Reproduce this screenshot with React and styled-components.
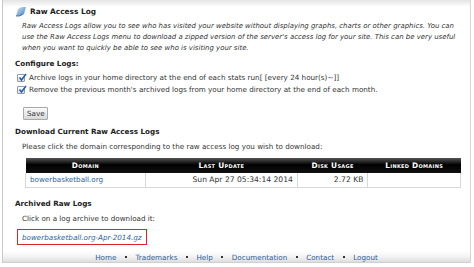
import React from "react";
import styled, { createGlobalStyle } from "styled-components";

const Global = createGlobalStyle`
    html, body {
        margin: 0;
        padding: 0;
        background: #fff;
        font-family: "DejaVu Sans", Verdana, sans-serif;
        color: #333;
    }
`

const Page = styled.div`
    width: 474px;
    height: 267px;
    overflow: hidden;
`

const Panel = styled.div`
    margin-left: 2px;
    width: 467px;
    height: 263px;
    border-left: 1px solid #c8c8c8;
    border-right: 1px solid #d6d6d6;
    display: flex;
    flex-direction: column;
    background: linear-gradient(#e4e4e4, #fff 7px);
`

const Content = styled.div`
    flex: 1;
    padding: 4px 8px 0 12px;
`

const TitleRow = styled.div`
    display: flex;
    align-items: center;
    gap: 3px;
    height: 14px;
`

const Title = styled.h1`
    margin: 0;
    font-size: 7.4px;
    font-weight: bold;
    color: #222;
`

const Intro = styled.p`
    margin: 3px 0 0 7px;
    font-size: 6.95px;
    font-style: italic;
    line-height: 11px;
    white-space: nowrap;
    color: #333;
`

const Heading = styled.h2`
    margin: ${p => p.$top || 8}px 0 0 0;
    font-size: 7.2px;
    font-weight: bold;
    color: #222;
    line-height: 11px;
`

const CheckRow = styled.label`
    display: flex;
    align-items: center;
    gap: 4px;
    margin: ${p => p.$top || 0}px 0 0 2px;
    font-size: 7.2px;
    line-height: 12px;
    color: #333;
`

const Box = styled.span`
    width: 6px;
    height: 6px;
    border: 1px solid #8a9ab0;
    border-radius: 1px;
    background: linear-gradient(#fff, #dde3ea);
    position: relative;
    flex: none;
`

const Tick = styled.svg`
    position: absolute;
    left: 0;
    top: -2px;
`

const SaveButton = styled.button`
    display: block;
    margin: 11px 0 0 8px;
    padding: 0 3px;
    width: 25px;
    height: 13px;
    font-family: inherit;
    font-size: 7.2px;
    color: #333;
    border: 1px solid #a9a9a9;
    border-radius: 1px;
    background: linear-gradient(#fbfbfb, #d8d8d8);
`

const Note = styled.p`
    margin: ${p => p.$top || 4}px 0 0 7px;
    font-size: 7.2px;
    line-height: 11px;
    color: #333;
`

const Table = styled.table`
    margin: 6px 0 0 10px;
    width: 436px;
    border-collapse: collapse;
    font-size: 7.6px;
`

const Th = styled.th`
    height: 15px;
    padding: 0 4px;
    background: linear-gradient(#555, #000 45%, #111);
    color: #fff;
    font-weight: bold;
    font-size: 7.4px;
    font-variant: small-caps;
    letter-spacing: 0.3px;
    text-align: center;
    width: ${p => p.$w}px;
`

const Td = styled.td`
    height: 14px;
    padding: 0 4px;
    border: 1px solid #d8d8d8;
    border-top: none;
    text-align: ${p => p.$align || "left"};
    color: #333;
`

const Link = styled.a`
    color: #2a5f9e;
    text-decoration: none;
    font-size: 7.2px;
    font-style: ${p => (p.$italic ? "italic" : "normal")};
`

const Archive = styled.div`
    margin: 5px 0 0 2px;
    width: 130px;
    height: 16px;
    border: 1.5px solid #d9262c;
    display: flex;
    align-items: center;
    padding-left: 4px;
    box-sizing: border-box;
`

const Footer = styled.div`
    height: 11px;
    display: flex;
    justify-content: center;
    align-items: flex-end;
    gap: 8.5px;
    font-size: 7.2px;
    line-height: 9px;
    background: linear-gradient(#fff, #f3f3f3 50%, #dedede);
    border-bottom: 1px solid #d0d0d0;
`

const Dot = styled.span`
    width: 2px;
    height: 2px;
    margin-bottom: 4px;
    background: #333;
`

const FooterLink = styled.a`
    color: #2a5f9e;
    text-decoration: none;
`

const LogIcon = () => (
    <svg width="12" height="11" viewBox="0 0 12 11">
        <defs>
            <linearGradient id="lg" x1="0" y1="0" x2="1" y2="1">
                <stop offset="0" stopColor="#d4e6f5" />
                <stop offset="1" stopColor="#3f7fc0" />
            </linearGradient>
        </defs>
        <path d="M1 10 L3 3 Q5 1 8 1 L11 1 L9 8 Q7 10 4 10 Z" fill="url(#lg)" />
        <path d="M1 10 L4 10 Q6 10 7 8" fill="none" stroke="#2d5f95" strokeWidth="0.8" />
    </svg>
)

const Check = ({ children, top }) => (
    <CheckRow $top={top}>
        <Box>
            <Tick width="9" height="9" viewBox="0 0 9 9">
                <path d="M1.5 4.5 L3.5 7 L8 1" fill="none" stroke="#2a5ba8" strokeWidth="1.6" />
            </Tick>
        </Box>
        {children}
    </CheckRow>
)

const footerLinks = ["Home", "Trademarks", "Help", "Documentation", "Contact", "Logout"];

const App = () => (
    <Page>
        <Global />
        <Panel>
            <Content>
                <TitleRow>
                    <LogIcon />
                    <Title>Raw Access Log</Title>
                </TitleRow>
                <Intro>
                    Raw Access Logs allow you to see who has visited your website without displaying graphs, charts or other graphics. You can<br />
                    use the Raw Access Logs menu to download a zipped version of the server's access log for your site. This can be very useful<br />
                    when you want to quickly be able to see who is visiting your site.
                </Intro>
                <Heading $top={3.5}>Configure Logs:</Heading>
                <Check top={3.5}>Archive logs in your home directory at the end of each stats run[ [every 24 hour(s)~]]</Check>
                <Check>Remove the previous month's archived logs from your home directory at the end of each month.</Check>
                <SaveButton>Save</SaveButton>
                <Heading $top={5.5}>Download Current Raw Access Logs</Heading>
                <Note>Please click the domain corresponding to the raw access log you wish to download:</Note>
                <Table>
                    <thead>
                        <tr>
                            <Th $w={117}>Domain</Th>
                            <Th $w={159}>Last Update</Th>
                            <Th $w={68}>Disk Usage</Th>
                            <Th $w={92}>Linked Domains</Th>
                        </tr>
                    </thead>
                    <tbody>
                        <tr>
                            <Td><Link href="#">bowerbasketball.org</Link></Td>
                            <Td $align="right">Sun Apr 27 05:34:14 2014</Td>
                            <Td $align="right">2.72 KB</Td>
                            <Td></Td>
                        </tr>
                    </tbody>
                </Table>
                <Heading $top={10.5}>Archived Raw Logs</Heading>
                <Note>Click on a log archive to download it:</Note>
                <Archive>
                    <Link href="#" $italic>bowerbasketball.org-Apr-2014.gz</Link>
                </Archive>
            </Content>
            <Footer>
                {footerLinks.map((l, i) => (
                    <React.Fragment key={l}>
                        {i > 0 && <Dot />}
                        <FooterLink href="#">{l}</FooterLink>
                    </React.Fragment>
                ))}
            </Footer>
        </Panel>
    </Page>
);

export default App;
